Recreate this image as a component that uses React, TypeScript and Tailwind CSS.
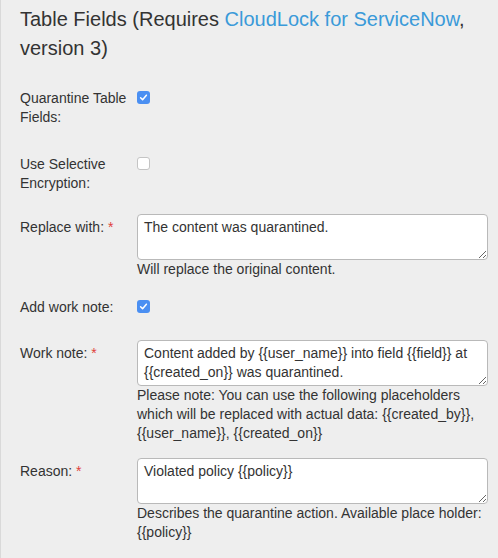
import React from "react";

const Req = () => <span className="text-[#e0413a]"> *</span>;

function Check({ checked }: { checked: boolean }) {
  return checked ? (
    <span className="mt-[2px] flex h-[13px] w-[13px] items-center justify-center rounded-[3px] bg-[#4a8ff2]">
      <svg width="9" height="9" viewBox="0 0 9 9" fill="none">
        <path d="M1.6 4.8 L3.6 6.8 L7.4 2.2" stroke="white" strokeWidth="1.5" strokeLinecap="round" strokeLinejoin="round" />
      </svg>
    </span>
  ) : (
    <span className="mt-[2px] block h-[13px] w-[13px] rounded-[3px] border border-[#c4c4c4] bg-white" />
  );
}

function Area({ value }: { value: string }) {
  return (
    <textarea
      readOnly
      defaultValue={value}
      className="block h-[46px] w-[351px] rounded-[4px] border border-[#b9b9b9] bg-white px-[6px] py-[3px] text-[14px] leading-[19px] text-[#333] outline-none"
      style={{ fontFamily: '"Liberation Sans", Arial, sans-serif' }}
    />
  );
}

export default function App() {
  return (
    <div
      className="h-[558px] w-[498px] overflow-hidden border-l border-[#d9d9d9] bg-[#eeeeee] text-[#333]"
      style={{ fontFamily: '"Liberation Sans", Arial, sans-serif' }}
    >
      <div className="pl-[19px] pr-2 pt-[5px] text-[20px] leading-[29px]">
        Table Fields (Requires <span className="text-[#3a9ad9]">CloudLock for ServiceNow</span>, version 3)
      </div>

      <div className="text-[14px] leading-[19px]">
        <div className="mt-[26px] flex">
          <div className="w-[136px] pl-[19px] pr-2">Quarantine Table Fields:</div>
          <Check checked />
        </div>

        <div className="mt-[28px] flex">
          <div className="w-[136px] pl-[19px] pr-2">Use Selective Encryption:</div>
          <Check checked={false} />
        </div>

        <div className="mt-[21px] flex">
          <div className="w-[136px] pl-[19px] pt-[4px]">
            Replace with:<Req />
          </div>
          <div>
            <Area value="The content was quarantined." />
            <div>Will replace the original content.</div>
          </div>
        </div>

        <div className="mt-[19px] flex">
          <div className="w-[136px] pl-[19px]">Add work note:</div>
          <Check checked />
        </div>

        <div className="mt-[23px] flex">
          <div className="w-[136px] pl-[19px] pt-[4px]">
            Work note:<Req />
          </div>
          <div className="w-[351px]">
            <Area value="Content added by {{user_name}} into field {{field}} at {{created_on}} was quarantined." />
            <div>
              Please note: You can use the following placeholders which will be replaced with actual data: {"{{created_by}}"},
              {" {{user_name}}, {{created_on}}"}
            </div>
          </div>
        </div>

        <div className="mt-[15px] flex">
          <div className="w-[136px] pl-[19px] pt-[4px]">
            Reason:<Req />
          </div>
          <div className="w-[351px]">
            <Area value="Violated policy {{policy}}" />
            <div>Describes the quarantine action. Available place holder: {"{{policy}}"}</div>
          </div>
        </div>
      </div>
    </div>
  );
}
